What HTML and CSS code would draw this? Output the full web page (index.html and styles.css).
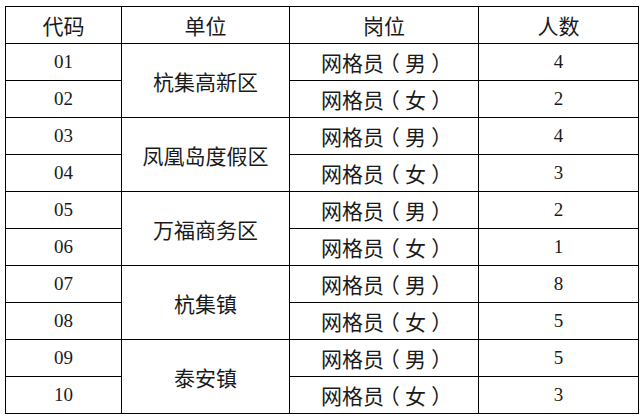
FILE: index.html
```html
<!DOCTYPE html>
<html lang="zh">
<head>
<meta charset="utf-8">
<link rel="stylesheet" href="styles.css">
</head>
<body>
<table class="grid">
  <colgroup>
    <col class="c1"><col class="c2"><col class="c3"><col class="c4">
  </colgroup>
  <thead>
    <tr><th>代码</th><th>单位</th><th>岗位</th><th>人数</th></tr>
  </thead>
  <tbody>
    <tr><td class="num">01</td><td rowspan="2">杭集高新区</td><td>网格员<span class="p">（</span>男<span class="p">）</span></td><td class="num">4</td></tr>
    <tr><td class="num">02</td><td>网格员<span class="p">（</span>女<span class="p">）</span></td><td class="num">2</td></tr>
    <tr><td class="num">03</td><td rowspan="2">凤凰岛度假区</td><td>网格员<span class="p">（</span>男<span class="p">）</span></td><td class="num">4</td></tr>
    <tr><td class="num">04</td><td>网格员<span class="p">（</span>女<span class="p">）</span></td><td class="num">3</td></tr>
    <tr><td class="num">05</td><td rowspan="2">万福商务区</td><td>网格员<span class="p">（</span>男<span class="p">）</span></td><td class="num">2</td></tr>
    <tr><td class="num">06</td><td>网格员<span class="p">（</span>女<span class="p">）</span></td><td class="num">1</td></tr>
    <tr><td class="num">07</td><td rowspan="2">杭集镇</td><td>网格员<span class="p">（</span>男<span class="p">）</span></td><td class="num">8</td></tr>
    <tr><td class="num">08</td><td>网格员<span class="p">（</span>女<span class="p">）</span></td><td class="num">5</td></tr>
    <tr><td class="num">09</td><td rowspan="2">泰安镇</td><td>网格员<span class="p">（</span>男<span class="p">）</span></td><td class="num">5</td></tr>
    <tr><td class="num">10</td><td>网格员<span class="p">（</span>女<span class="p">）</span></td><td class="num">3</td></tr>
  </tbody>
</table>
</body>
</html>
```
FILE: styles.css
```css
html, body {
  margin: 0;
  padding: 0;
  background: #ffffff;
}
body {
  padding: 6px 0 0 5px;
}
.grid {
  border-collapse: collapse;
  table-layout: fixed;
  width: 633px;
  font-family: "Noto Sans CJK SC", sans-serif;
  font-size: 21px;
  color: #1a1a1a;
}
.c1 { width: 116px; }
.c2 { width: 168px; }
.c3 { width: 189px; }
.c4 { width: 160px; }
.grid th, .grid td {
  border: 1px solid #000;
  height: 36px;
  padding: 0;
  line-height: 24px;
  text-align: center;
  vertical-align: middle;
  font-weight: normal;
  box-sizing: border-box;
  white-space: nowrap;
}
.grid tr {
  height: 37px;
}
.grid .num {
  font-family: "Liberation Serif", serif;
  font-size: 19px;
}
.p {
  display: inline-block;
  width: 1em;
  text-align: center;
  font-feature-settings: "halt";
}
```
